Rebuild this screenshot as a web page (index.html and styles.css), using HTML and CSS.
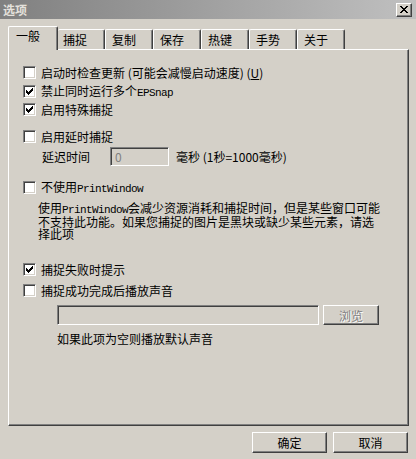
FILE: index.html
```html
<!DOCTYPE html>
<html lang="zh-CN">
<head>
    <meta charset="UTF-8">
    <title>选项</title>
    <link rel="stylesheet" href="styles.css">
</head>
<body>
    <div class="window">
        <div class="titlebar">
            <span class="title">选项</span>
            <span class="close">
                <svg width="8" height="7" viewBox="0 0 8 7" shape-rendering="crispEdges"><path d="M0 0h2v1h-2zM6 0h2v1h-2zM1 1h2v1h-2zM5 1h2v1h-2zM2 2h4v1h-4zM3 3h2v1h-2zM2 4h4v1h-4zM1 5h2v1h-2zM5 5h2v1h-2zM0 6h2v1h-2zM6 6h2v1h-2z" fill="#000"/></svg>
            </span>
        </div>

        <div class="tabs">
            <div class="tab active">一般</div>
            <div class="tab first">捕捉</div>
            <div class="tab">复制</div>
            <div class="tab">保存</div>
            <div class="tab">热键</div>
            <div class="tab">手势</div>
            <div class="tab">关于</div>
        </div>

        <div class="panel">
            <label class="check-row r1"><span class="box"></span><span>启动时检查更新 (可能会减慢启动速度) (<u>U</u>)</span></label>
            <label class="check-row r2"><span class="box checked"><svg width="7" height="7" viewBox="0 0 7 7" shape-rendering="crispEdges"><path d="M0 2h1v3h-1zM1 3h1v3h-1zM2 4h1v3h-1zM3 3h1v3h-1zM4 2h1v3h-1zM5 1h1v3h-1zM6 0h1v3h-1z" fill="#000"/></svg></span><span>禁止同时运行多个<span class="mono">EPSnap</span></span></label>
            <label class="check-row r3"><span class="box checked"><svg width="7" height="7" viewBox="0 0 7 7" shape-rendering="crispEdges"><path d="M0 2h1v3h-1zM1 3h1v3h-1zM2 4h1v3h-1zM3 3h1v3h-1zM4 2h1v3h-1zM5 1h1v3h-1zM6 0h1v3h-1z" fill="#000"/></svg></span><span>启用特殊捕捉</span></label>
            <label class="check-row r4"><span class="box"></span><span>启用延时捕捉</span></label>

            <div class="delay-row">
                <span class="delay-label">延迟时间</span>
                <span class="field small">0</span>
                <span class="delay-unit">毫秒 (1秒=1000毫秒)</span>
            </div>

            <label class="check-row r5"><span class="box"></span><span>不使用<span class="mono">PrintWindow</span></span></label>
            <p class="note">使用<span class="mono">PrintWindow</span>会减少资源消耗和捕捉时间，但是某些窗口可能<br>不支持此功能。如果您捕捉的图片是黑块或缺少某些元素，请选<br>择此项</p>

            <label class="check-row r6"><span class="box checked"><svg width="7" height="7" viewBox="0 0 7 7" shape-rendering="crispEdges"><path d="M0 2h1v3h-1zM1 3h1v3h-1zM2 4h1v3h-1zM3 3h1v3h-1zM4 2h1v3h-1zM5 1h1v3h-1zM6 0h1v3h-1z" fill="#000"/></svg></span><span>捕捉失败时提示</span></label>
            <label class="check-row r7"><span class="box"></span><span>捕捉成功完成后播放声音</span></label>

            <div class="file-row">
                <span class="field wide"></span>
                <span class="btn disabled browse">浏览</span>
            </div>
            <p class="hint">如果此项为空则播放默认声音</p>
        </div>

        <div class="buttons">
            <span class="btn">确定</span>
            <span class="btn">取消</span>
        </div>
    </div>
</body>
</html>
```

FILE: styles.css
```css
* {
    box-sizing: border-box;
}

body {
    margin: 0;
    background: #d4d0c8;
    font-family: "Noto Sans CJK SC", sans-serif;
    font-size: 12px;
    color: #000;
}

.window {
    width: 416px;
    height: 459px;
    overflow: hidden;
}

.titlebar {
    height: 19px;
    display: flex;
    align-items: center;
    justify-content: space-between;
    padding: 0 4px 0 3px;
    background: linear-gradient(to right, #808080, #c0c0c0);
}

.title {
    color: #e4e1dc;
    font-weight: bold;
    line-height: 13px;
}

.close {
    width: 16px;
    height: 14px;
    display: flex;
    align-items: center;
    justify-content: center;
    background: #d4d0c8;
    border: 1px solid;
    border-color: #fff #404040 #404040 #fff;
    box-shadow: inset -1px -1px #808080;
}

/* tabs */
.tabs {
    display: flex;
    align-items: flex-end;
    height: 23px;
    margin-top: 7px;
    padding-left: 8px;
    position: relative;
    z-index: 1;
}

.tab {
    width: 48px;
    height: 20px;
    padding: 3px 0 0 6px;
    line-height: 13px;
    background: #d4d0c8;
    border: 1px solid;
    border-color: #fff #404040 transparent #fff;
    border-bottom: none;
    border-radius: 2px 2px 0 0;
    box-shadow: inset -1px 0 #808080;
}

.tab.first {
    width: 47px;
    border-left: none;
    padding-left: 5px;
}

.tab.active {
    width: 50px;
    height: 24px;
    margin-bottom: -1px;
    padding: 2px 0 0 7px;
}

/* panel */
.panel {
    width: 401px;
    height: 377px;
    margin-left: 8px;
    padding-left: 14px;
    border: 1px solid;
    border-color: #fff #404040 #404040 #fff;
    box-shadow: inset -1px -1px #808080;
}

.check-row {
    display: flex;
    align-items: center;
    gap: 5px;
    height: 13px;
    line-height: 13px;
    white-space: nowrap;
}

.r1 { margin-top: 16px; }
.r2 { margin-top: 6px; }
.r3 { margin-top: 5px; }
.r4 { margin-top: 14px; }
.r5 { margin-top: 15px; }
.r6 { margin-top: 23px; }
.r7 { margin-top: 8px; }

.box {
    width: 13px;
    height: 13px;
    flex: none;
    display: flex;
    padding: 1px;
    background: #fff;
    border: 1px solid;
    border-color: #808080 #fff #fff #808080;
    box-shadow: inset 1px 1px #404040, inset -1px -1px #d4d0c8;
}

.box svg {
    margin: 1px 0 0 1px;
}

.mono {
    font-family: "Liberation Mono", monospace;
    font-size: 11px;
    letter-spacing: -0.6px;
    line-height: 11px;
}

.delay-row {
    display: flex;
    align-items: center;
    height: 19px;
    margin-top: 4px;
    padding-left: 19px;
    white-space: nowrap;
}

.delay-label {
    width: 68px;
}

.delay-unit {
    margin-left: 7px;
}

.field {
    display: block;
    height: 100%;
    padding: 2px 0 0 4px;
    line-height: 13px;
    color: #808080;
    background: #d4d0c8;
    border: 1px solid;
    border-color: #808080 #fff #fff #808080;
    box-shadow: inset 1px 1px #404040, inset -1px -1px #d4d0c8;
}

.field.small {
    width: 59px;
}

.note {
    margin: 8px 0 0;
    padding-left: 15px;
    line-height: 12px;
    white-space: nowrap;
}

.file-row {
    display: flex;
    gap: 4px;
    height: 20px;
    margin-top: 8px;
    padding-left: 34px;
}

.field.wide {
    width: 262px;
}

.hint {
    margin: 8px 0 0;
    padding-left: 34px;
    line-height: 12px;
}

/* buttons */
.btn {
    display: flex;
    align-items: center;
    justify-content: center;
    width: 75px;
    height: 21px;
    line-height: 13px;
    background: #d4d0c8;
    border: 1px solid;
    border-color: #fff #404040 #404040 #fff;
    box-shadow: inset -1px -1px #808080;
}

.btn.browse {
    width: 56px;
    height: 20px;
}

.btn.disabled {
    color: #808080;
    text-shadow: 1px 1px #fff;
}

.buttons {
    display: flex;
    justify-content: flex-end;
    gap: 6px;
    margin-top: 6px;
    padding-right: 8px;
}
```
